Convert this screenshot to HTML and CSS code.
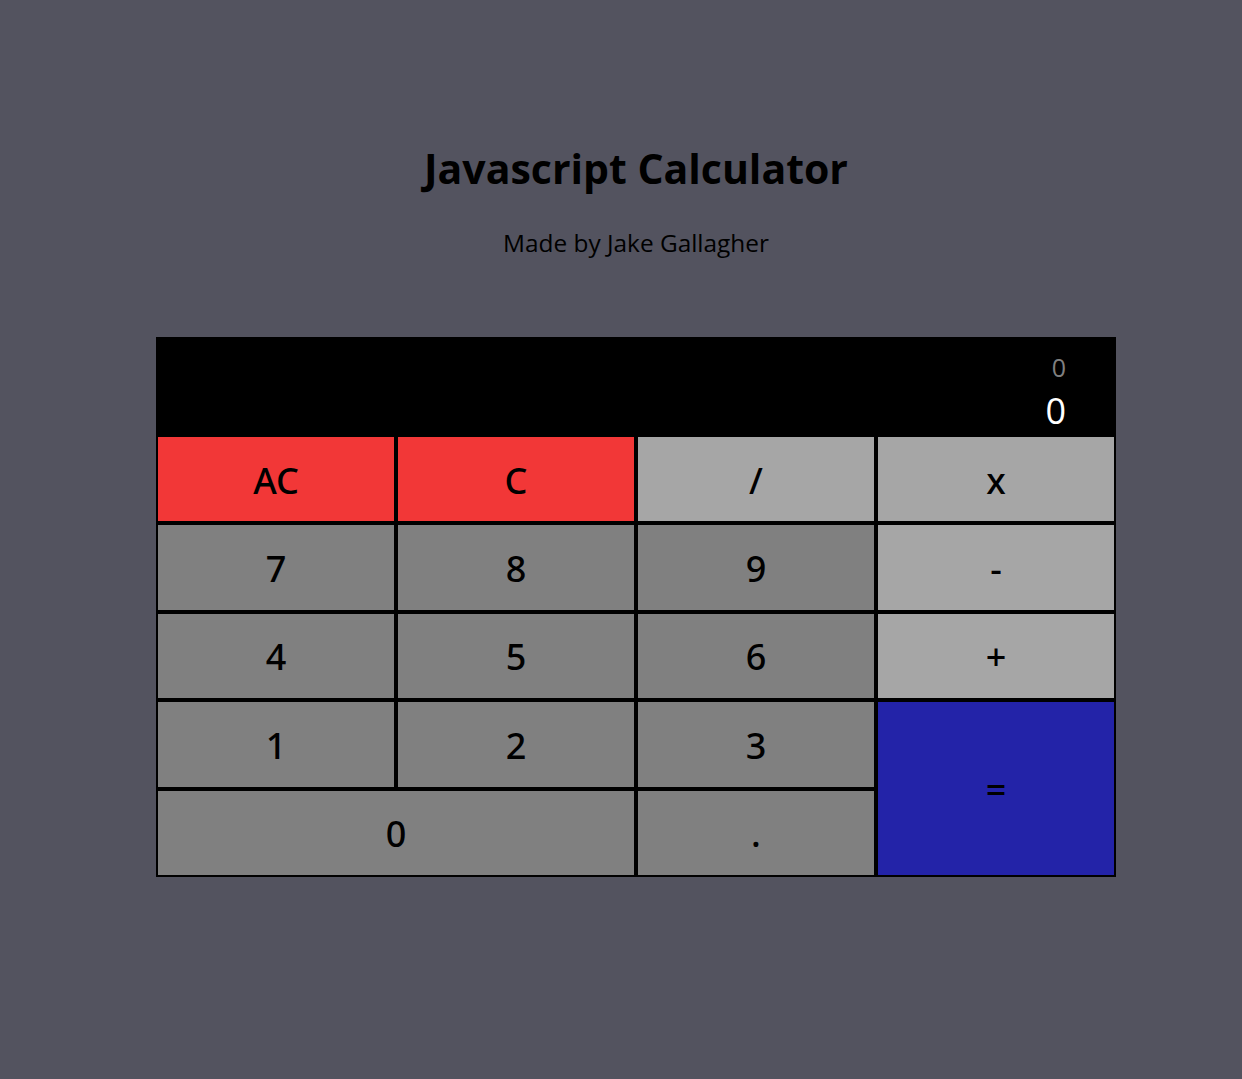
FILE: index.html
```html
<!DOCTYPE html>
<html lang="en">
<head>
<meta charset="utf-8">
<title>Javascript Calculator</title>
<link rel="stylesheet" href="styles.css">
</head>
<body>
<header class="header">
  <h1 class="title">Javascript Calculator</h1>
  <p class="subtitle">Made by Jake Gallagher</p>
</header>
<main class="calculator">
  <div class="display">
    <div class="formula">0</div>
    <div class="output">0</div>
  </div>
  <div class="keys">
    <button class="key key-red">AC</button>
    <button class="key key-red">C</button>
    <button class="key key-light">/</button>
    <button class="key key-light">x</button>
    <button class="key">7</button>
    <button class="key">8</button>
    <button class="key">9</button>
    <button class="key key-light">-</button>
    <button class="key">4</button>
    <button class="key">5</button>
    <button class="key">6</button>
    <button class="key key-light">+</button>
    <button class="key">1</button>
    <button class="key">2</button>
    <button class="key">3</button>
    <button class="key key-equals">=</button>
    <button class="key key-zero">0</button>
    <button class="key">.</button>
  </div>
</main>
</body>
</html>
```
FILE: styles.css
```css
html, body {
  margin: 0;
  padding: 0;
}
body {
  background: #53535f;
  font-family: "Open Sans", "Noto Sans", sans-serif;
  color: #000;
  padding: 143px 0 0 30px;
}
.header {
  text-align: center;
}
.title {
  margin: 0;
  font-size: 41px;
  line-height: 50px;
  font-weight: 700;
}
.subtitle {
  margin: 35px 0 0;
  font-size: 24.4px;
  line-height: 30px;
}
.calculator {
  width: 960px;
  margin: 79px auto 0;
}
.display {
  background: #000;
  height: 98px;
  box-sizing: border-box;
  padding: 14px 50px 0 0;
  text-align: right;
}
.formula {
  color: #808080;
  font-size: 25px;
  line-height: 32px;
}
.output {
  color: #fff;
  font-size: 36px;
  line-height: 42px;
  margin-top: 7px;
}
.keys {
  display: grid;
  grid-template-columns: repeat(4, 240px);
  grid-template-rows: repeat(5, 88.4px);
}
.key {
  box-sizing: border-box;
  border: 2px solid #000;
  background: #808080;
  font-family: "Noto Sans", "Open Sans", sans-serif;
  font-size: 36px;
  font-weight: 500;
  color: #000;
  padding: 2px 0 0;
  margin: 0;
  cursor: pointer;
}
.key-red {
  background: #f23737;
}
.key-light {
  background: #a6a6a6;
}
.key-equals {
  background: #2323a8;
  grid-column: 4;
  grid-row: 4 / span 2;
}
.key-zero {
  grid-column: 1 / span 2;
  grid-row: 5;
}
```
